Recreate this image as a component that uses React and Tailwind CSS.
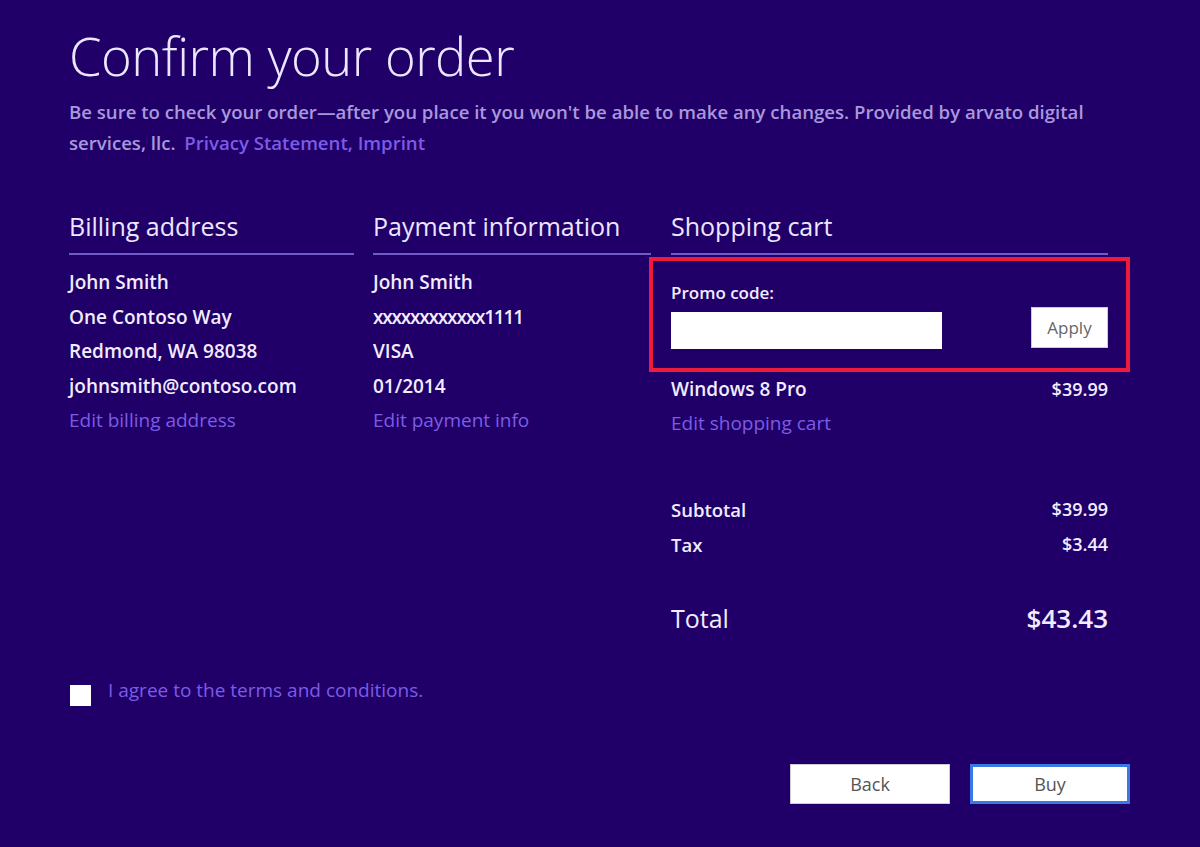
const billing = ['John Smith', 'One Contoso Way', 'Redmond, WA 98038', 'johnsmith@contoso.com']
const payment = ['John Smith', 'xxxxxxxxxxxx1111', 'VISA', '01/2014']

function Column({ title, lines, editLabel, className }) {
  return (
    <div className={className}>
      <h2 className="text-[25px] leading-[34px] text-[#ece6ff] pb-[10px] border-b-2 border-[#6e5cc8]">{title}</h2>
      <div className="pt-[10px]">
        {lines.map((line, i) => (
          <p
            key={i}
            className={`text-[19px] leading-[34.5px] font-semibold text-[#f1ecff] ${line.startsWith('xxx') ? 'tracking-[-1.2px]' : ''}`}
          >
            {line}
          </p>
        ))}
        <a className="block text-[19px] leading-[34px] text-[#7b5ce6]">{editLabel}</a>
      </div>
    </div>
  )
}

export default function App() {
  return (
    <div className="min-h-screen w-[1200px] h-[847px] bg-[#200068] font-['Open_Sans','Liberation_Sans',sans-serif] overflow-hidden">
      <div className="pl-[69px] pr-[70px] pt-[21px]">
        <h1 className="text-[52.5px] leading-[70px] font-light text-[#ece6ff] tracking-[-0.5px]">Confirm your order</h1>
        <p className="mt-[5px] text-[18.6px] leading-[31px] font-semibold text-[#a898dc]">
          Be sure to check your order—after you place it you won't be able to make any changes. Provided by arvato digital
          <br />
          services, llc. <a className="ml-[4px] text-[#7b5ce6]">Privacy Statement, Imprint</a>
        </p>

        <div className="mt-[51px] flex gap-[19px]">
          <Column className="w-[285px]" title="Billing address" lines={billing} editLabel="Edit billing address" />
          <Column className="w-[278px]" title="Payment information" lines={payment} editLabel="Edit payment info" />

          <div className="w-[437px] ml-[1px]">
            <h2 className="text-[25px] leading-[34px] text-[#ece6ff] pb-[10px] border-b-2 border-[#6e5cc8]">Shopping cart</h2>

            <div className="-mx-[22px] mt-[2px] border-[4px] border-[#ee1c3c] pl-[18px] pr-[18px] pt-[20px] pb-[19px]">
              <p className="text-[17px] leading-[24px] font-semibold text-[#f1ecff]">Promo code:</p>
              <div className="mt-[1px] flex items-center justify-between">
                <input className="mt-[6px] w-[271px] h-[37px] bg-white border-none outline-none" />
                <button className="w-[77px] h-[41px] bg-white text-[17px] text-[#666] border border-[#ccc]">Apply</button>
              </div>
            </div>

            <div className="flex justify-between text-[19px] leading-[34px] font-semibold text-[#f1ecff]">
              <span>Windows 8 Pro</span>
              <span className="text-[18px]">$39.99</span>
            </div>
            <a className="block text-[19px] leading-[34px] text-[#7b5ce6]">Edit shopping cart</a>

            <div className="mt-[52px] text-[18.5px] leading-[35px] font-semibold text-[#f1ecff]">
              <div className="flex justify-between">
                <span>Subtotal</span>
                <span className="text-[18px]">$39.99</span>
              </div>
              <div className="flex justify-between">
                <span>Tax</span>
                <span className="text-[18px]">$3.44</span>
              </div>
            </div>

            <div className="mt-[38px] flex justify-between text-[25px] leading-[36px] text-[#f1ecff]">
              <span>Total</span>
              <span className="text-[26px] font-semibold">$43.43</span>
            </div>
          </div>
        </div>

        <label className="mt-[49px] flex items-center gap-[17px]">
          <span className="ml-[1px] w-[21px] h-[21px] bg-white" />
          <span className="-mt-[10px] text-[19px] text-[#7b5ce6]">I agree to the terms and conditions.</span>
        </label>

        <div className="mt-[58px] flex justify-end gap-[20px]">
          <button className="w-[160px] h-[40px] bg-white text-[18px] text-[#555] border border-[#ccc]">Back</button>
          <button className="w-[160px] h-[40px] bg-white text-[18px] text-[#555] border-[3px] border-[#3a78e8]">Buy</button>
        </div>
      </div>
    </div>
  )
}
